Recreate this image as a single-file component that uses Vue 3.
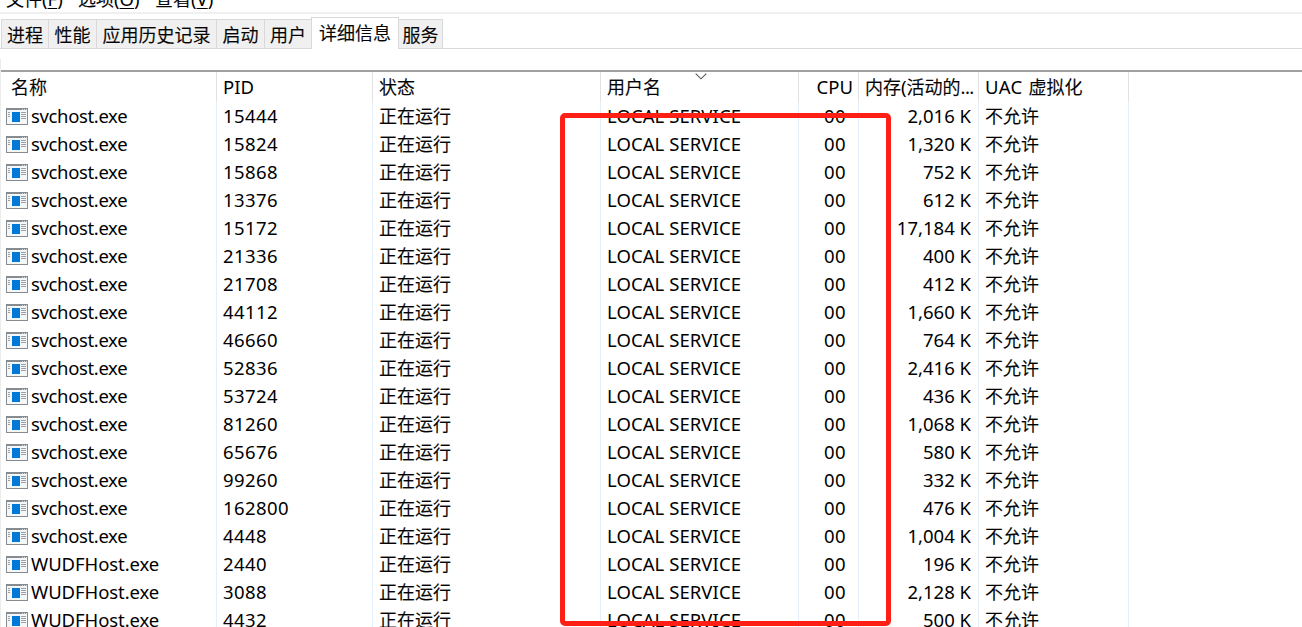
<script setup>
const menus = [
  { label: '文件', key: 'F', cls: 'file' },
  { label: '选项', key: 'O', cls: 'opts' },
  { label: '查看', key: 'V', cls: 'view' },
]
const tabs = [
  { label: '进程', cls: 'w47' },
  { label: '性能', cls: 'w48' },
  { label: '应用历史记录', cls: 'w120' },
  { label: '启动', cls: 'w48' },
  { label: '用户', cls: 'w47' },
  { label: '详细信息', cls: 'active' },
  { label: '服务', cls: 'w44' },
]
const rows = [
  ['15444', '2,016'], ['15824', '1,320'], ['15868', '752'], ['13376', '612'],
  ['15172', '17,184'], ['21336', '400'], ['21708', '412'], ['44112', '1,660'],
  ['46660', '764'], ['52836', '2,416'], ['53724', '436'], ['81260', '1,068'],
  ['65676', '580'], ['99260', '332'], ['162800', '476'], ['4448', '1,004'],
  ['2440', '196'], ['3088', '2,128'], ['4432', '500'],
].map(([pid, mem], i) => ({ pid, mem, name: i < 16 ? 'svchost.exe' : 'WUDFHost.exe' }))
</script>

<template>
  <div class="window">
    <nav class="menu">
      <span v-for="m in menus" :key="m.key" :class="m.cls">{{ m.label }}<span class="lat">(<u>{{ m.key }}</u>)</span></span>
    </nav>
    <div class="tabs">
      <div v-for="t in tabs" :key="t.label" class="tab" :class="t.cls">{{ t.label }}</div>
    </div>
    <div class="pane">
      <div class="list">
        <div class="row head">
          <div class="name">名称</div>
          <div class="lat pid">PID</div>
          <div>状态</div>
          <div class="user">用户名
            <svg class="sort" width="12" height="7" viewBox="0 0 12 7"><path d="M.7.7 6 5.8 11.3.7" fill="none" stroke="#555" stroke-width="1.1" /></svg>
          </div>
          <div class="cpu lat">CPU</div>
          <div class="memh">内存<span class="lat">(</span>活动的<span class="lat dots">...</span></div>
          <div><span class="lat uac">UAC</span><span class="gap"></span>虚拟化</div>
          <div></div>
        </div>
        <div v-for="r in rows" :key="r.pid" class="row">
          <div class="name">
            <svg class="icon" width="22" height="17" viewBox="0 0 22 17">
              <rect x=".5" y=".5" width="21" height="16" fill="#f5f6f7" stroke="#858b90" />
              <path d="M0 0H22V2H0Z" fill="#858b90" />
              <path d="M16 1h1v1h-1zM18 1h1v1h-1zM20 1h1v1h-1z" fill="#d9dcdf" />
              <path d="M2 4.5h2M2 6.5h2M2 8.5h2M15 4.5h5M15 6.5h5M15 8.5h5M15 10.5h5" stroke="#9b9fa3" />
              <rect x="6" y="4" width="8" height="10" fill="#0078d7" />
            </svg>
            <span class="lat" :class="r.name[0] === 'W' ? 'wudf' : 'svc'">{{ r.name }}</span>
          </div>
          <div class="lat num">{{ r.pid }}</div>
          <div class="cjk">正在运行</div>
          <div class="lat svcname">LOCAL SERVICE</div>
          <div class="lat num zero">00</div>
          <div class="lat mem">{{ r.mem }} K</div>
          <div class="cjk">不允许</div>
          <div></div>
        </div>
      </div>
    </div>
    <div class="mark"></div>
  </div>
</template>

<style>
body { background: #fff; overflow: hidden; }
</style>

<style scoped>
.window {
  position: relative;
  width: 1302px;
  height: 627px;
  overflow: hidden;
  background: #fff;
  color: #000;
  font: 350 18px/28px "Noto Sans CJK SC", sans-serif;
  -webkit-text-stroke: .2px #000;
  white-space: nowrap;
}
.lat {
  font-family: "Noto Sans", "Noto Sans CJK SC", sans-serif;
  font-size: 18.5px;
  font-weight: 400;
  -webkit-text-stroke: 0;
}
.menu {
  display: flex;
  height: 12px;
  padding-left: 6px;
  align-items: flex-end;
  border-bottom: 2px solid #f0f0f0;
  box-sizing: content-box;
}
.menu > span { height: 28px; width: 72px; flex: none; }
.menu > .opts { width: 77px; }
.menu u { text-decoration-thickness: 1px; text-underline-offset: 2px; }
.tabs {
  display: flex;
  align-items: flex-end;
  height: 35px;
  padding-left: 1px;
  box-shadow: inset 0 -1px #d9d9d9;
}
.tab {
  box-sizing: border-box;
  height: 30px;
  border: 1px solid #d9d9d9;
  border-right: 0;
  background: #f0f0f0;
  text-align: center;
  line-height: 28px;
}
.w48 { width: 48px; }
.w47 { width: 47px; }
.w120 { width: 120px; }
.w44 { width: 44px; border-left: 0; border-right: 1px solid #d9d9d9; }
.active { width: 88px; height: 32px; background: #fff; border-right: 1px solid #d9d9d9; border-bottom: 0; }
.pane {
  height: 568px;
  margin-top: 10px;
  padding-top: 11px;
  box-sizing: border-box;
  border-left: 1px solid #ececec;
}
.list { border-top: 2px solid #a0a0a0; }
.row {
  display: grid;
  grid-template-columns: 216px 156px 228px 198px 60px 120px 150px 1fr;
  height: 28px;
}
.row > div { box-sizing: border-box; padding-left: 6px; border-right: 1px solid #e5effc; height: 100%; }
.row > div:last-child { border-right: 0; }
.row > .cjk { line-height: 27px; }
.head { height: 30px; line-height: 29px; }
.head > div { border-right-color: #e2e2e2; }
.head > .name { padding-left: 10px; }
.row:not(.head) > .name { display: flex; align-items: center; padding-left: 5px; }
.icon { flex: none; margin-right: 3px; }
.svc { letter-spacing: -.36px; }
.wudf { letter-spacing: -.08px; }
.svcname { letter-spacing: .07px; }
.num { letter-spacing: .4px; }
.uac { letter-spacing: .3px; }
.dots { letter-spacing: -.6px; }
.user { position: relative; }
.sort { position: absolute; left: 94px; top: 1px; }
.row > .cpu, .row > .zero, .row > .mem { text-align: right; padding-right: 5px; }
.row > .zero { padding-right: 12px; }
.row > .mem { padding-right: 7px; }
.gap { display: inline-block; width: 6px; }
.mark {
  position: absolute;
  left: 560px;
  top: 113px;
  width: 331px;
  height: 513px;
  box-sizing: border-box;
  border: 5px solid #ff1f14;
  border-radius: 5px;
}
</style>
